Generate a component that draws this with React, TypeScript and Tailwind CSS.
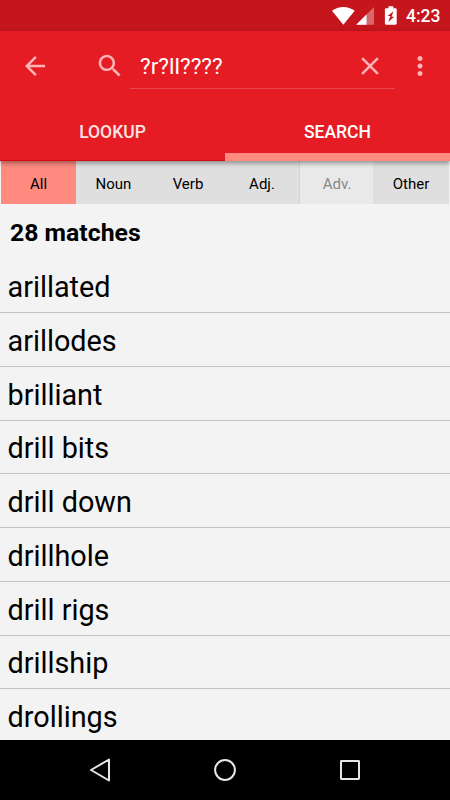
import React from "react";

const words = [
  "arillated",
  "arillodes",
  "brilliant",
  "drill bits",
  "drill down",
  "drillhole",
  "drill rigs",
  "drillship",
  "drollings",
];

function Icon({ d, className = "" }: { d: string; className?: string }) {
  return (
    <svg viewBox="0 0 24 24" className={`h-[30px] w-[30px] shrink-0 fill-[#ffb4b7] ${className}`}>
      <path d={d} />
    </svg>
  );
}

function StatusBar() {
  return (
    <div className="flex h-[31px] shrink-0 items-center justify-end bg-[#c4161c] text-white">
      <svg viewBox="0 0 70 31" className="mr-[6px] h-[31px] w-[70px] fill-white">
        <path d="M2 10.700C5.200 8.400 9.200 7 13.300 7s8.200 1.400 11.400 3.700L13.300 24.700z" />
        <path d="M44 7V24.800H26.200z" opacity=".35" />
        <path d="M36.500 14.500V24.800H26.200z" />
        <path
          fillRule="evenodd"
          d="M58.500 8.200V6.200h4.800v2h2.200c.7 0 1.200.5 1.200 1.200v14.200c0 .7-.5 1.200-1.200 1.200h-9.400c-.7 0-1.200-.5-1.200-1.200V9.400c0-.7.5-1.200 1.200-1.200zM63.500 11.200l-5.900 4.700h2.800l-2.100 6 5.900-5.200h-2.700z"
        />
      </svg>
      <span className="mr-[10px] w-[34px] pt-[3px] whitespace-nowrap text-[17.5px] leading-none font-medium">4:23</span>
    </div>
  );
}

function Toolbar() {
  return (
    <div className="flex h-[70px] shrink-0 items-center pl-5">
      <Icon d="M20 11H7.830l5.590-5.590L12 4l-8 8 8 8 1.410-1.410L7.830 13H20v-2z" />
      <Icon
        className="ml-[45px]"
        d="M15.500 14h-.79l-.28-.27C15.410 12.590 16 11.110 16 9.500 16 5.910 13.090 3 9.500 3S3 5.910 3 9.500 5.910 16 9.500 16c1.610 0 3.090-.59 4.230-1.570l.27.28v.79l5 4.990L20.490 19l-4.990-5zm-6 0C7.010 14 5 11.990 5 9.500S7.010 5 9.500 5 14 7.010 14 9.500 11.990 14 9.500 14z"
      />
      <div className="ml-[5px] flex h-[45px] w-[265px] items-center border-b border-[#e84950] pl-[10px]">
        <span className="flex-1 pt-[3px] text-[22.6px] leading-none text-white">?r?ll????</span>
        <Icon
          className="mr-[10px]"
          d="M19 6.410L17.590 5 12 10.590 6.410 5 5 6.410 10.590 12 5 17.590 6.410 19 12 13.410 17.590 19 19 17.590 13.410 12z"
        />
      </div>
      <Icon
        className="ml-[10px]"
        d="M12 8c1.100 0 2-.9 2-2s-.9-2-2-2-2 .9-2 2 .9 2 2 2zm0 2c-1.100 0-2 .9-2 2s.9 2 2 2 2-.9 2-2-.9-2-2-2zm0 6c-1.100 0-2 .9-2 2s.9 2 2 2 2-.9 2-2-.9-2-2-2z"
      />
    </div>
  );
}

function Tabs() {
  return (
    <div className="flex h-[60px] shrink-0 text-[17.5px] font-medium">
      <div className="flex flex-1 items-center justify-center border-b border-[#d8060e] pt-[4px] text-[#fbe3e4]">
        LOOKUP
      </div>
      <div className="flex flex-1 items-center justify-center border-b-[8px] border-[#ff8a80] pt-[11px] text-white">
        SEARCH
      </div>
    </div>
  );
}

function Filters() {
  const base = "flex items-center justify-center pt-[3px] text-[15px]";
  return (
    <div className="mx-px grid h-[43px] shrink-0 grid-cols-[75px_75px_74px_75px_73px_76px] text-black">
      <div className={`${base} bg-[#ff8a80]`}>All</div>
      <div className={`${base} bg-[#dfdfdf]`}>Noun</div>
      <div className={`${base} bg-[#dfdfdf]`}>Verb</div>
      <div className={`${base} border-r border-[#d3d3d3] bg-[#dfdfdf]`}>Adj.</div>
      <div className={`${base} bg-[#e9e9e9] pl-px text-[#888]`}>Adv.</div>
      <div className={`${base} bg-[#dfdfdf]`}>Other</div>
    </div>
  );
}

function NavBar() {
  return (
    <div className="flex h-[60px] shrink-0 items-center justify-center gap-[95px] bg-black">
      <svg viewBox="0 0 30 30" className="h-[30px] w-[30px] fill-none stroke-[#e6e6e6] stroke-2">
        <path d="M24 4.500v21L6 15z" strokeLinejoin="round" />
      </svg>
      <svg viewBox="0 0 30 30" className="h-[30px] w-[30px] fill-none stroke-[#e6e6e6] stroke-2">
        <circle cx="15" cy="15" r="9.900" />
      </svg>
      <svg viewBox="0 0 30 30" className="h-[30px] w-[30px] fill-none stroke-[#e6e6e6] stroke-2">
        <rect x="6" y="6" width="18" height="18" rx=".4" />
      </svg>
    </div>
  );
}

export default function App() {
  return (
    <div className="flex h-[800px] w-[450px] flex-col overflow-hidden bg-[#f3f3f3] font-['Roboto',sans-serif]">
      <StatusBar />
      <header className="z-10 flex h-[130px] shrink-0 flex-col bg-[#e51c23] shadow-[0_2px_5px_rgba(0,0,0,0.4)]">
        <Toolbar />
        <Tabs />
      </header>
      <Filters />
      <h1 className="h-[55.4px] shrink-0 pt-[12px] pl-[10px] text-[24.8px] leading-[34px] font-bold text-black">
        28 matches
      </h1>
      <ul className="min-h-0 flex-1 overflow-hidden">
        {words.map((word) => (
          <li
            key={word}
            className="flex h-[53.75px] items-center border-b border-[#c4c4c4] pt-[3.500px] pl-[7.500px] text-[28.8px] leading-none text-black"
          >
            {word}
          </li>
        ))}
      </ul>
      <NavBar />
    </div>
  );
}
